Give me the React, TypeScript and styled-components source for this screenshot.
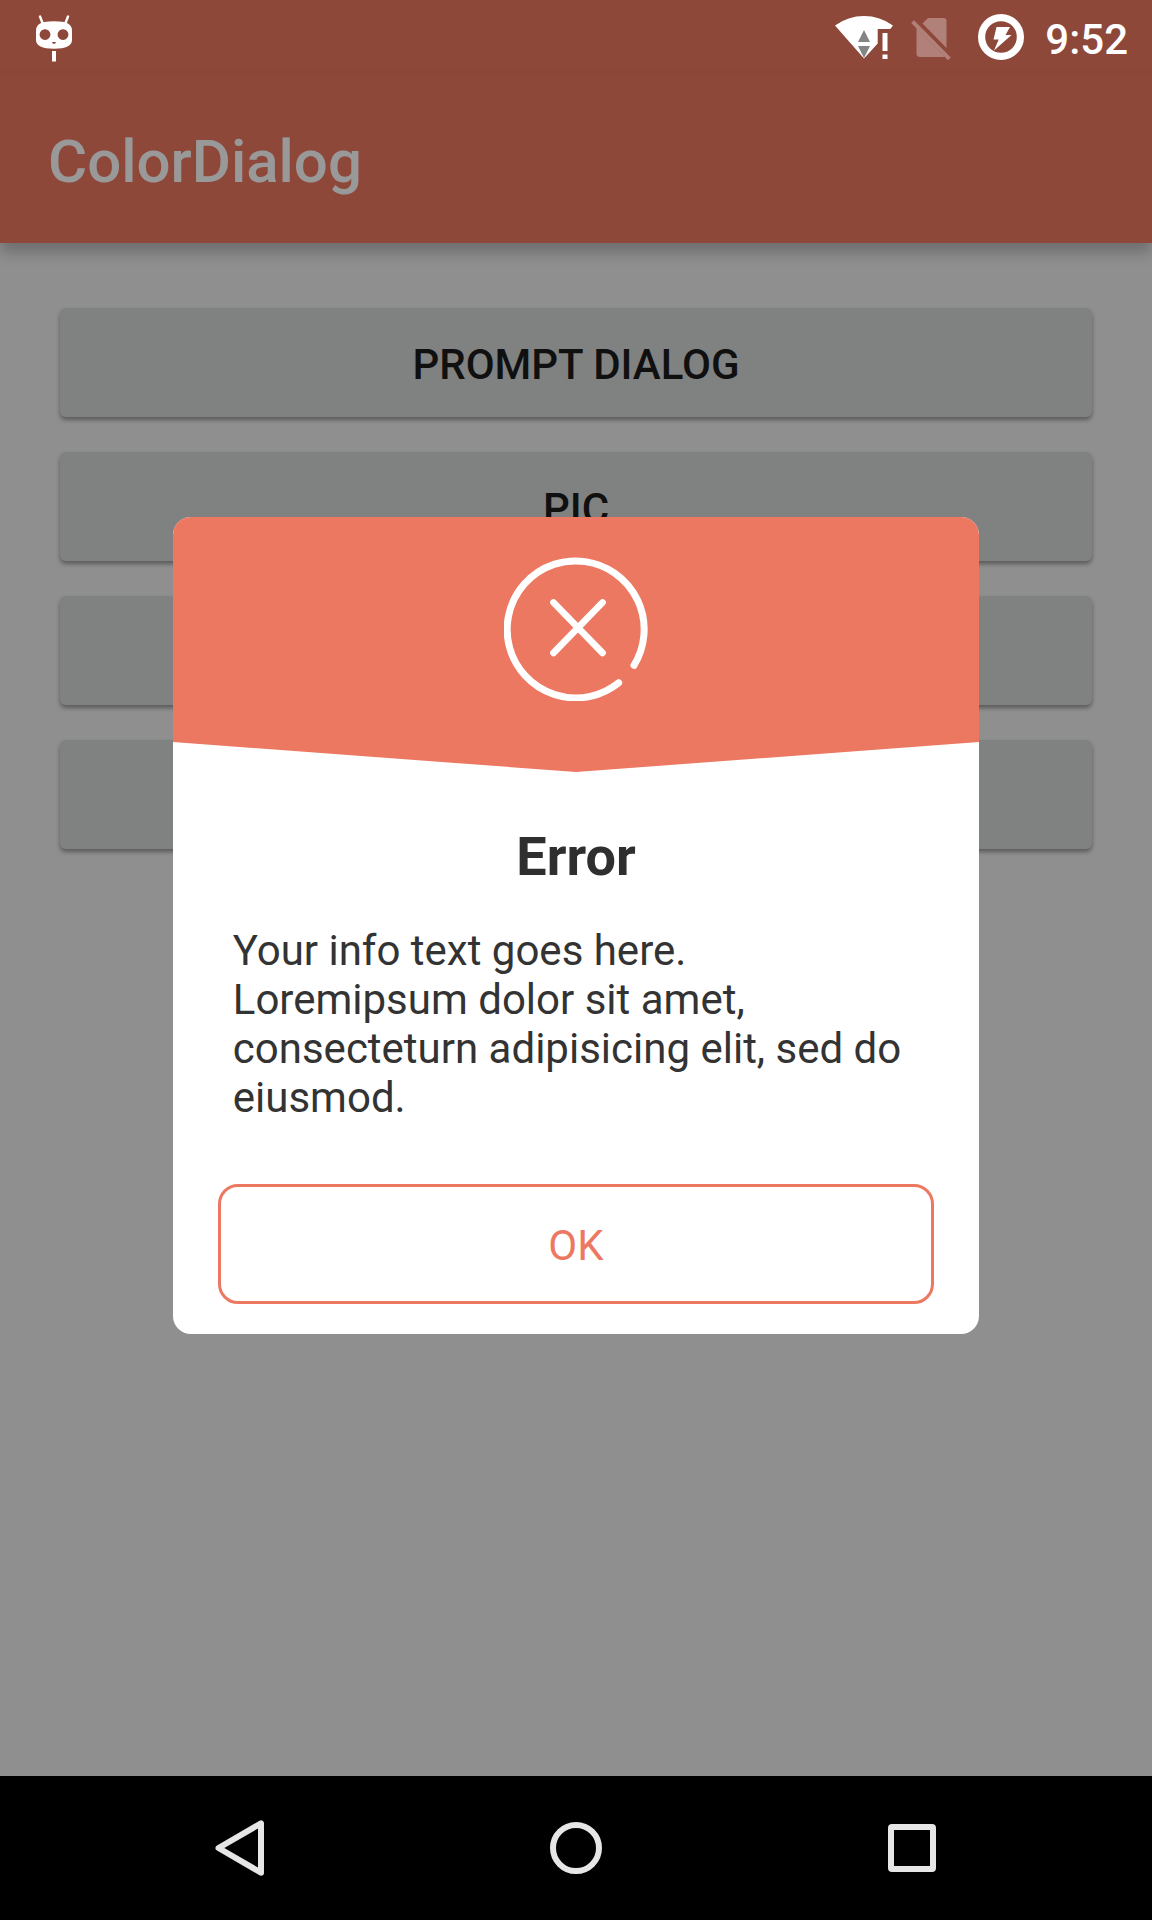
import React from "react";
import styled, { createGlobalStyle } from "styled-components";

const GlobalStyle = createGlobalStyle`
  * {
    box-sizing: border-box;
  }
  body {
    margin: 0;
    background: #000;
    font-family: Roboto, "Liberation Sans", sans-serif;
  }
  button {
    font-family: inherit;
    cursor: pointer;
  }
`;

const Screen = styled.div`
  display: flex;
  flex-direction: column;
  min-height: 100vh;
`;

const StatusBar = styled.header`
  display: flex;
  align-items: flex-start;
  height: 75px;
  padding: 0 24px 0 36px;
  background: #8e483a;
  color: #fff;
`;

const SignalIcons = styled.div`
  display: flex;
  gap: 18px;
  margin-left: auto;
`;

const Battery = styled.div`
  display: flex;
  margin: 0 21px 0 27px;
`;

const Clock = styled.time`
  padding-top: 15px;
  font-size: 42px;
  font-weight: 500;
  line-height: 49px;
`;

const Activity = styled.div`
  position: relative;
  display: flex;
  flex: 1;
  flex-direction: column;
  background: #eee;
`;

const Toolbar = styled.div`
  display: flex;
  align-items: center;
  height: 168px;
  padding: 6px 48px 0;
  background: #ed7861;
  box-shadow: 0 9px 14px rgba(0, 0, 0, 0.24);
`;

const AppTitle = styled.h1`
  margin: 0;
  color: #fff;
  font-size: 60px;
  font-weight: 500;
  line-height: 70px;
`;

const ButtonList = styled.main`
  display: flex;
  flex-direction: column;
  gap: 35px;
  padding: 65px 60px;
`;

const RaisedButton = styled.button`
  width: 100%;
  height: 109px;
  padding: 4px 24px 0;
  border: 0;
  border-radius: 6px;
  background: #d6d7d7;
  box-shadow: 0 3px 4px rgba(0, 0, 0, 0.36);
  color: #1c1c1c;
  font-size: 42px;
  font-weight: 500;
  line-height: 49px;
  text-transform: uppercase;
`;

const Scrim = styled.div`
  position: absolute;
  inset: 0;
  display: flex;
  align-items: center;
  justify-content: center;
  background: rgba(0, 0, 0, 0.4);
`;

const Dialog = styled.section`
  width: 70%;
  overflow: hidden;
  border-radius: 18px;
  background: #fff;
`;

const DialogBanner = styled.div`
  display: flex;
  justify-content: center;
  height: 255px;
  padding-top: 40px;
  background: #ed7861;
  clip-path: polygon(0 0, 100% 0, 100% 225px, 50% 100%, 0 225px);
`;

const DialogTitle = styled.h2`
  margin: 53px 60px 38px;
  color: #2f2f2f;
  font-size: 54px;
  font-weight: 700;
  line-height: 63px;
  text-align: center;
`;

const DialogText = styled.p`
  margin: 0 60px;
  color: #333;
  font-size: 42px;
  line-height: 49px;
`;

const DialogActions = styled.div`
  display: flex;
  padding: 62px 45px 30px;
`;

const OutlineButton = styled.button`
  flex: 1;
  height: 120px;
  padding: 2px 24px 0;
  border: 3px solid #ed7861;
  border-radius: 20px;
  background: #fff;
  color: #ed7861;
  font-size: 42px;
  line-height: 49px;
`;

const NavBar = styled.nav`
  display: grid;
  grid-template-columns: repeat(3, 1fr);
  height: 144px;
  padding: 0 72px;
  background: #000;
`;

const NavButton = styled.button`
  display: flex;
  align-items: center;
  justify-content: center;
  padding: 0;
  border: 0;
  background: none;
  color: #e6e6e6;
`;

const CidIcon = () => (
  <svg width="36" height="75" viewBox="0 0 36 75" aria-hidden="true">
    <g stroke="#fff" strokeWidth="2.4" strokeLinecap="round">
      <path d="M4 16.5 L6.5 23" />
      <path d="M32 16.5 L29.500 23" />
    </g>
    <path
      fill="#fff"
      fillRule="evenodd"
      d="M8 22 Q18 20.500 28 22 Q36 23.500 36 31 V40 Q36 48.500 18 48.800 Q0 48.500 0 40 V31 Q0 23.500 8 22 Z M9 29.200 a5.400 5.400 0 1 0 0.010 0 Z M27 29.200 a5.400 5.400 0 1 0 0.010 0 Z M16 42 h4 q-0.500 2 -2 2 q-1.500 0 -2 -2 Z"
    />
    <rect x="16" y="51" width="4" height="10.500" fill="#fff" />
  </svg>
);

const WifiIcon = () => (
  <svg width="58" height="75" viewBox="0 0 58 75" aria-hidden="true">
    <path fill="#fff" d="M0 25.500 Q13 16 29 16 Q45 16 58 25.500 L55.300 29 H42.700 V43.500 L29 58.500 Z" />
    <rect x="47.500" y="33" width="5" height="18" fill="#fff" />
    <rect x="47.500" y="54.500" width="5" height="4.500" fill="#fff" />
    <path fill="#848484" d="M29 30 L35 42 H23 Z M23 46 H35 L29 58 Z" />
  </svg>
);

const NoSimIcon = () => (
  <svg width="40" height="75" viewBox="0 0 40 75" aria-hidden="true">
    <g fill="#b18078">
      <path d="M17 18 H32.500 Q35.500 18 35.500 21 V48 L11.500 23.500 Z" />
      <path d="M5.500 28 L33.500 56.500 Q33 57 32 57 H9 Q5.500 57 5.500 53.500 Z" />
      <path d="M3 20.200 L39.800 57.500 L37 60.200 L0.200 23 Z" />
    </g>
  </svg>
);

const ChargeIcon = () => (
  <svg width="46" height="75" viewBox="0 0 46 75" aria-hidden="true">
    <circle cx="23" cy="37" r="19.400" fill="none" stroke="#fff" strokeWidth="7.200" />
    <path fill="#fff" d="M18.500 27 H32 L27.500 35 H33.500 L16 50.500 L20.700 39.500 H15.500 Z" />
  </svg>
);

const ErrorIcon = () => (
  <svg width="144" height="144" viewBox="0 0 144 144" aria-hidden="true">
    <g fill="none" stroke="#fff" strokeLinecap="round">
      <path strokeWidth="7" d="M130 108.300 A68.500 68.500 0 1 0 114.700 125.700" />
      <path strokeWidth="6.800" d="M49.500 45.500 L98.500 95.800 M98.500 45.500 L49.500 95.800" />
    </g>
  </svg>
);

const BackIcon = () => (
  <svg width="56" height="60" viewBox="0 0 56 60" aria-hidden="true">
    <path
      d="M49 5.300 V54.700 L6.500 30 Z"
      fill="none"
      stroke="currentColor"
      strokeWidth="6"
      strokeLinejoin="round"
    />
  </svg>
);

const HomeIcon = () => (
  <svg width="52" height="52" viewBox="0 0 52 52" aria-hidden="true">
    <circle cx="26" cy="26" r="23" fill="none" stroke="currentColor" strokeWidth="6" />
  </svg>
);

const RecentsIcon = () => (
  <svg width="48" height="48" viewBox="0 0 48 48" aria-hidden="true">
    <path
      fill="currentColor"
      fillRule="evenodd"
      d="M4 0 H44 Q48 0 48 4 V44 Q48 48 44 48 H4 Q0 48 0 44 V4 Q0 0 4 0 Z M6 6 V42 H42 V6 Z"
    />
  </svg>
);

export default function App() {
  return (
    <Screen>
      <GlobalStyle />
      <StatusBar>
        <CidIcon />
        <SignalIcons>
          <WifiIcon />
          <NoSimIcon />
        </SignalIcons>
        <Battery>
          <ChargeIcon />
        </Battery>
        <Clock>9:52</Clock>
      </StatusBar>
      <Activity>
        <Toolbar>
          <AppTitle>ColorDialog</AppTitle>
        </Toolbar>
        <ButtonList>
          <RaisedButton type="button">Prompt Dialog</RaisedButton>
          <RaisedButton type="button">Pic</RaisedButton>
          <RaisedButton type="button" />
          <RaisedButton type="button" />
        </ButtonList>
        <Scrim>
          <Dialog role="dialog" aria-modal="true" aria-labelledby="dialog-title">
            <DialogBanner>
              <ErrorIcon />
            </DialogBanner>
            <DialogTitle id="dialog-title">Error</DialogTitle>
            <DialogText>
              Your info text goes here. Loremipsum dolor sit amet, consecteturn adipisicing elit, sed do eiusmod.
            </DialogText>
            <DialogActions>
              <OutlineButton type="button">OK</OutlineButton>
            </DialogActions>
          </Dialog>
        </Scrim>
      </Activity>
      <NavBar>
        <NavButton type="button">
          <BackIcon />
        </NavButton>
        <NavButton type="button">
          <HomeIcon />
        </NavButton>
        <NavButton type="button">
          <RecentsIcon />
        </NavButton>
      </NavBar>
    </Screen>
  );
}
